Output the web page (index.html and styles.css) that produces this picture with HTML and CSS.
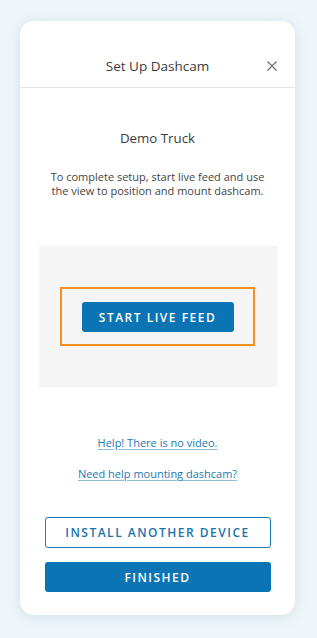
FILE: index.html
```html
<!DOCTYPE html>
<html>
<head>
<meta charset="utf-8">
<link rel="stylesheet" href="styles.css">
</head>
<body>
<div class="card">
  <div class="header">
    <span class="title">Set Up Dashcam</span>
    <svg class="close" width="10" height="10" viewBox="0 0 10 10"><path d="M0.5 0.5L9.5 9.5M9.5 0.5L0.5 9.5" stroke="#6b6b6b" stroke-width="1.1" fill="none"/></svg>
  </div>
  <div class="content">
    <div class="vehicle">Demo Truck</div>
    <p class="desc">To complete setup, start live feed and use<br>the view to position and mount dashcam.</p>
    <div class="feed">
      <div class="highlight">
        <button class="btn primary live">START LIVE FEED</button>
      </div>
    </div>
    <a class="link first" href="#">Help! There is no video.</a>
    <a class="link second" href="#">Need help mounting dashcam?</a>
    <button class="btn outline">INSTALL ANOTHER DEVICE</button>
    <button class="btn primary finish">FINISHED</button>
  </div>
</div>
</body>
</html>
```
FILE: styles.css
```css
html, body {
  margin: 0;
  padding: 0;
}
body {
  background: #eef6f9;
  font-family: "Open Sans", "Lato", sans-serif;
  color: #3b3b3b;
  padding-top: 21px;
  height: 638px;
  box-sizing: border-box;
}
.card {
  margin-left: 20px;
  width: 275px;
  height: 594px;
  background: #fff;
  border-radius: 14px;
  box-shadow: 0 2px 14px rgba(120, 150, 170, 0.22);
  display: flex;
  flex-direction: column;
}
.header {
  border-bottom: 1px solid #e6e6e6;
  position: relative;
  display: flex;
  align-items: flex-end;
  justify-content: center;
  padding-bottom: 13px;
  box-sizing: content-box;
  height: 53px;
}
.title {
  font-size: 13.5px;
  line-height: 16px;
  color: #3b3b3b;
}
.close {
  position: absolute;
  right: 18px;
  bottom: 16px;
}
.content {
  display: flex;
  flex-direction: column;
  align-items: center;
}
.vehicle {
  margin-top: 42px;
  font-size: 13.3px;
  line-height: 16px;
}
.desc {
  margin: 24px 0 0;
  font-size: 11px;
  line-height: 14px;
  text-align: center;
  color: #444;
}
.feed {
  margin-top: 48px;
  width: 238px;
  height: 141px;
  background: #f5f5f5;
  display: flex;
  align-items: center;
  justify-content: center;
}
.highlight {
  width: 191px;
  height: 55px;
  border: 2px solid #f7901e;
  display: flex;
  align-items: center;
  justify-content: center;
}
.btn {
  font-family: inherit;
  font-weight: 600;
  font-size: 12px;
  letter-spacing: 1.5px;
  border-radius: 3px;
  cursor: pointer;
  padding: 0;
}
.primary {
  background: #0a74b4;
  color: #fff;
  border: none;
}
.live {
  width: 152px;
  height: 30px;
  margin-top: 1px;
}
.link {
  font-size: 11px;
  line-height: 14px;
  color: #1c78b0;
  text-decoration: underline;
  text-decoration-color: #8fbcd8;
  text-underline-offset: 2px;
}
.first {
  margin-top: 49px;
}
.second {
  margin-top: 17px;
}
.outline {
  margin-top: 36px;
  width: 226px;
  height: 31px;
  background: #fff;
  border: 1px solid #1b78b2;
  color: #1b72ab;
}
.finish {
  margin-top: 14px;
  width: 226px;
  height: 30px;
}
```
